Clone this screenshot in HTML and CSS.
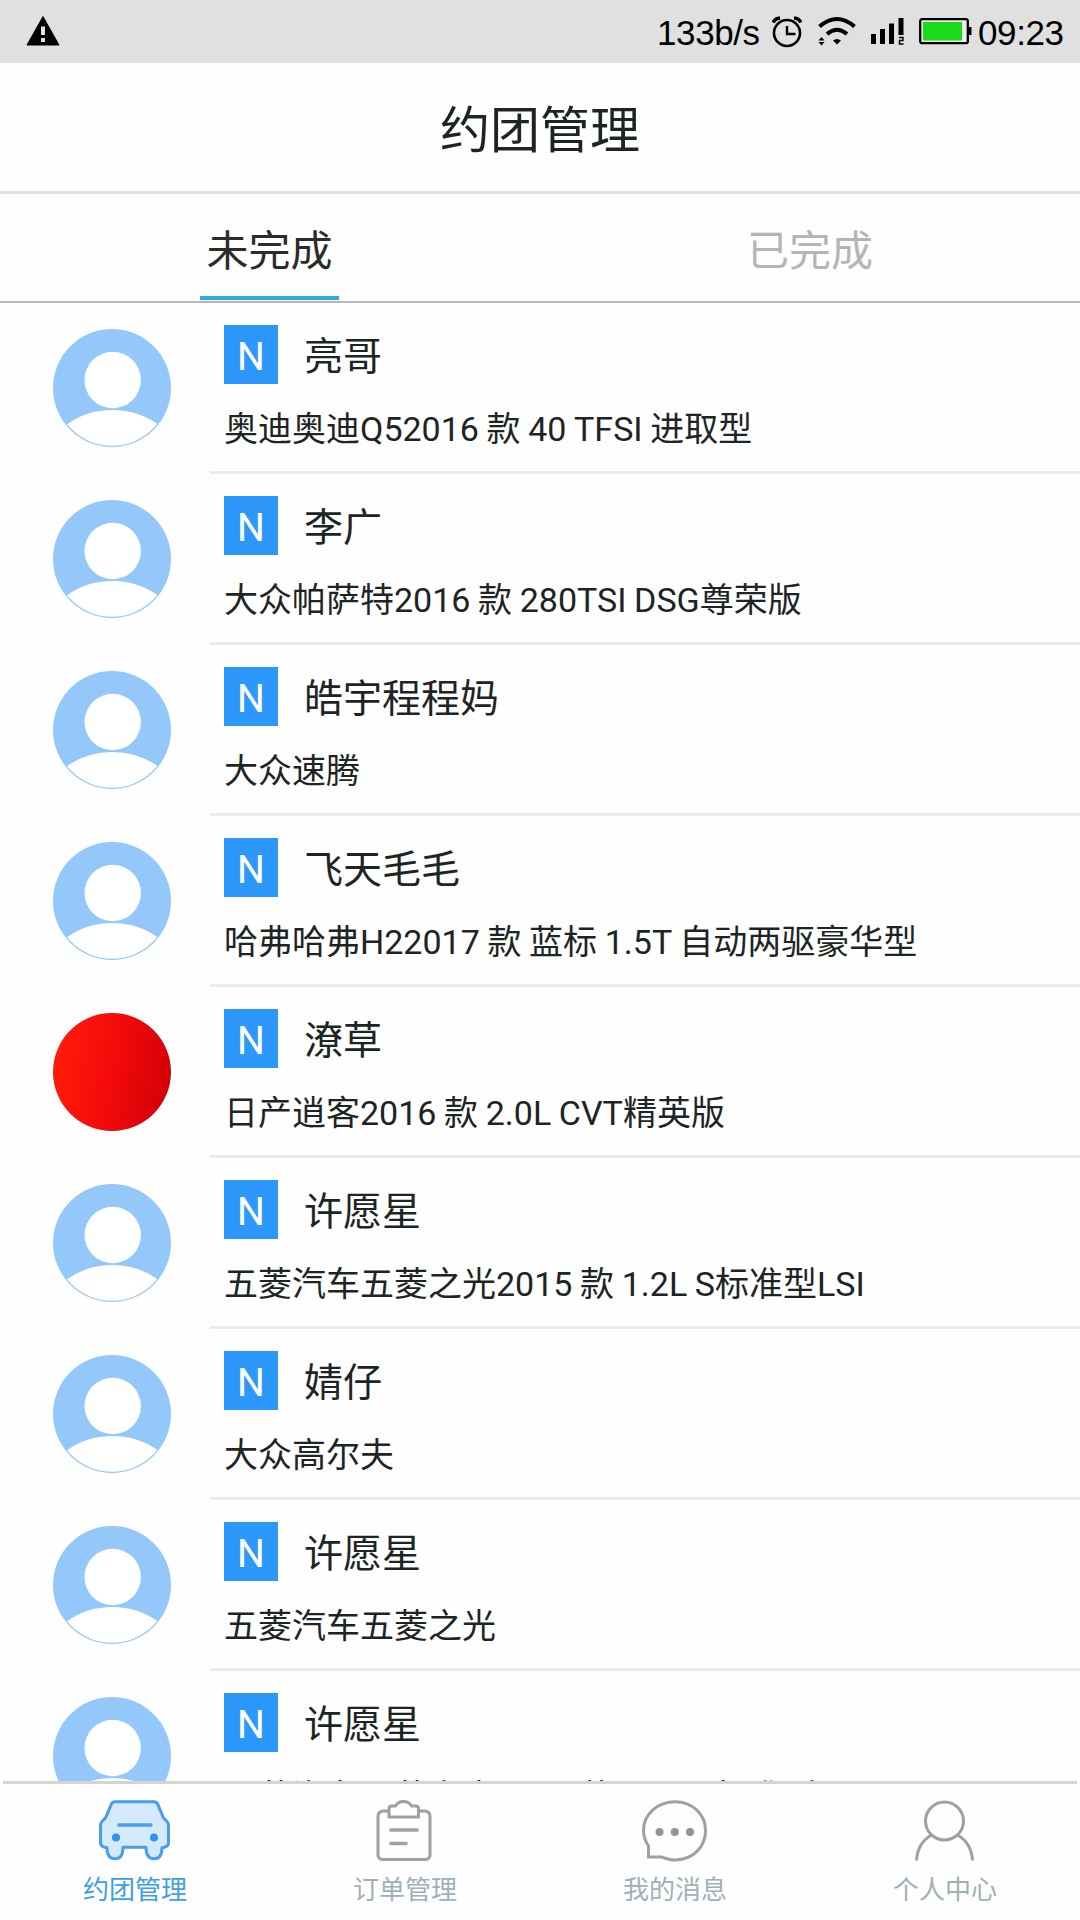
FILE: index.html
```html
<!DOCTYPE html>
<html lang="zh-CN">
<head>
<meta charset="utf-8">
<title>约团管理</title>
<link rel="stylesheet" href="styles.css">
</head>
<body>
<svg class="defs" width="0" height="0" aria-hidden="true">
  <symbol id="person" viewBox="0 0 118 118">
    <clipPath id="disc"><circle cx="59" cy="59" r="57.800"/></clipPath>
    <circle cx="59" cy="59" r="59" fill="#94c8fb"/>
    <g clip-path="url(#disc)" fill="#fff">
      <circle cx="59.7" cy="51" r="28.2"/>
      <path d="M13 96Q33 81 59.500 81Q85 81 106 96V125H13Z"/>
    </g>
  </symbol>
</svg>
<div class="screen">
  <div class="status">
    <svg class="warn" width="34" height="30" viewBox="0 0 34 30"><path d="M17 .5 33 29H1Z" fill="#000" stroke="#000" stroke-linejoin="round"/><path d="M15 10.500h4v8.500h-4zM15 22h4v4h-4z" fill="#e0e0e0"/></svg>
    <span class="speed">133b/s</span>
    <svg class="alarm" width="30" height="32" viewBox="0 0 30 32" fill="none" stroke="#000"><circle cx="15" cy="17" r="13" stroke-width="2.600"/><path d="M15 10v8h8.500" stroke-width="2.400"/><path d="M1 6.500Q3 2.500 8 2M29 6.500Q27 2.500 22 2" stroke-width="3.600"/></svg>
    <svg class="wifi" width="40" height="30" viewBox="0 0 40 30"><g fill="none" stroke="#000" stroke-width="4"><path d="M2.500 10.500Q20-4.500 37.500 10.500"/><path d="M10 18Q20 9.500 30 18"/></g><path d="M16 24.500Q20 21.500 24 24.500L20 28.500ZM1.500 24.500 4.500 21l3 3.500ZM1.500 26h6l-3 3.500Z"/></svg>
    <svg class="signal" width="34" height="28" viewBox="0 0 34 28"><path d="M0 16h5v10H0zM9 11h5v15H9zM18 5.500h5V26h-5zM27.500 0h5v17h-5z"/><path d="M28 19.500h4v3h-3.500v3.500h4" fill="none" stroke="#000" stroke-width="1.400"/></svg>
    <svg class="battery" width="53" height="28" viewBox="0 0 53 28"><rect x="1.200" y="1.200" width="47.600" height="24" rx="2" fill="#eee" stroke="#000" stroke-width="2.300"/><rect x="4" y="4" width="39" height="18.500" fill="#1bdc1b"/><path d="M49 9h3.500v8H49z"/></svg>
    <span class="clock">09:23</span>
  </div>
  <header class="header">约团管理</header>
  <nav class="tabs">
    <div class="tab active"><span>未完成</span></div>
    <div class="tab"><span>已完成</span></div>
  </nav>
  <main class="list">
    <div class="row"><svg class="avatar"><use href="#person"/></svg><div class="info"><div class="who"><span class="badge">N</span><span class="name">亮哥</span></div><div class="car">奥迪奥迪Q52016 款 40 TFSI 进取型</div></div></div>
    <div class="row"><svg class="avatar"><use href="#person"/></svg><div class="info"><div class="who"><span class="badge">N</span><span class="name">李广</span></div><div class="car">大众帕萨特2016 款 280TSI DSG尊荣版</div></div></div>
    <div class="row"><svg class="avatar"><use href="#person"/></svg><div class="info"><div class="who"><span class="badge">N</span><span class="name">皓宇程程妈</span></div><div class="car">大众速腾</div></div></div>
    <div class="row"><svg class="avatar"><use href="#person"/></svg><div class="info"><div class="who"><span class="badge">N</span><span class="name">飞天毛毛</span></div><div class="car">哈弗哈弗H22017 款 蓝标 1.5T 自动两驱豪华型</div></div></div>
    <div class="row"><div class="avatar red"></div><div class="info"><div class="who"><span class="badge">N</span><span class="name">潦草</span></div><div class="car">日产逍客2016 款 2.0L CVT精英版</div></div></div>
    <div class="row"><svg class="avatar"><use href="#person"/></svg><div class="info"><div class="who"><span class="badge">N</span><span class="name">许愿星</span></div><div class="car">五菱汽车五菱之光2015 款 1.2L S标准型LSI</div></div></div>
    <div class="row"><svg class="avatar"><use href="#person"/></svg><div class="info"><div class="who"><span class="badge">N</span><span class="name">婧仔</span></div><div class="car">大众高尔夫</div></div></div>
    <div class="row"><svg class="avatar"><use href="#person"/></svg><div class="info"><div class="who"><span class="badge">N</span><span class="name">许愿星</span></div><div class="car">五菱汽车五菱之光</div></div></div>
    <div class="row"><svg class="avatar"><use href="#person"/></svg><div class="info"><div class="who"><span class="badge">N</span><span class="name">许愿星</span></div><div class="car">五菱汽车五菱之光2015 款 1.2L S标准型LSI</div></div></div>
  </main>
  <div class="rule"></div>
  <footer class="bottom">
    <div class="item on">
      <svg width="72" height="64" viewBox="0 0 72 64"><path d="M16 2.800h39q3 0 4 3l5 12q1 2 3 3.500 2.500 2 2.500 5v17q0 4-4 5l-2.500.5q0 11-8 11-8 0-8-11.500H24q0 11.500-8 11.500-8 0-8-11l-2.500-.5q-4-1-4-5v-17q0-3 2.500-5Q6 19.800 7 17.800L12 5.800q1-3 4-3Z" fill="#d5e9fc" stroke="#479feb" stroke-width="3" stroke-linejoin="round"/><path d="M20 26h32" stroke="#479feb" stroke-width="3.400" stroke-linecap="round"/><circle cx="17" cy="38.500" r="4" fill="#2f93ee"/><circle cx="55" cy="38.500" r="4" fill="#2f93ee"/></svg>
      <span>约团管理</span>
    </div>
    <div class="item">
      <svg width="72" height="64" viewBox="0 0 72 64" fill="none" stroke="#9da1a0" stroke-width="3" stroke-linejoin="round"><path d="M19 12h-4q-6 0-6 5v38.500q0 5 5 5h42q5 0 5-5V17q0-5-6-5h-5"/><path d="M20 18V9.500Q20 7 23 7h3.500Q29 2.500 34.500 2.500T42.500 7h4q3 0 3 2.500V18Z"/><path d="M20.500 31h29M20.500 44.500h18" stroke-width="3.600"/></svg>
      <span>订单管理</span>
    </div>
    <div class="item">
      <svg width="72" height="64" viewBox="0 0 72 64"><path d="M9.500 58h13c4 1.500 8 3 13.500 3 18 0 30.500-13 30.500-29.500S53 2.800 36 2.800 4.500 15 4.500 31.500c0 6 2 11 5 15.500Z" fill="none" stroke="#9da1a0" stroke-width="3"/><g fill="#8f9392"><circle cx="20.500" cy="33" r="4"/><circle cx="35.800" cy="33" r="4"/><circle cx="51" cy="33" r="4"/></g></svg>
      <span>我的消息</span>
    </div>
    <div class="item">
      <svg width="72" height="64" viewBox="0 0 72 64" fill="none" stroke="#9da1a0" stroke-width="3"><circle cx="35.500" cy="22" r="19"/><path d="M22.500 36Q8.500 44 7.500 61.500M48.500 36Q62.500 44 63.500 61.500"/></svg>
      <span>个人中心</span>
    </div>
  </footer>
</div>
</body>
</html>
```
FILE: styles.css
```css
* { box-sizing: border-box; }
body {
  margin: 0;
  background: #fefefe;
  color: #1d2424;
  font-family: Roboto, "Noto Sans CJK SC", sans-serif;
}
.defs { position: absolute; }
.screen {
  width: 1080px;
  height: 1920px;
  display: flex;
  flex-direction: column;
  overflow: hidden;
}
.status {
  height: 63px;
  flex: none;
  display: flex;
  align-items: flex-start;
  background: #e0e0e0;
  color: #000;
  font: 35px/38px "Liberation Sans", sans-serif;
  letter-spacing: -0.4px;
}
.status svg { flex: none; }
.warn { margin: 16px 0 0 26px; }
.speed { width: 107px; margin: 14px 0 0 auto; }
.alarm { margin: 16px 0 0 8px; }
.wifi { margin: 16px 0 0 15px; }
.signal { margin: 18px 0 0 14px; }
.battery { margin: 18px 0 0 14px; }
.clock { width: 102px; margin: 14px 0 0 6px; }
.header {
  height: 131px;
  flex: none;
  border-bottom: 3px solid #dce3e7;
  font-size: 50px;
  line-height: 136px;
  text-align: center;
}
.tabs {
  height: 109px;
  flex: none;
  display: flex;
  border-bottom: 2px solid #b5b8b8;
  font-size: 42px;
  line-height: 115px;
  color: #b5b5b5;
}
.tab {
  flex: 1;
  display: flex;
  justify-content: center;
}
.tab span { height: 106px; padding: 0 6px; }
.tab.active span {
  width: 139px;
  margin-right: 1px;
  border-bottom: 4px solid #30a9dc;
  color: #2b2b2b;
  text-align: center;
}
.list { flex: 1; min-height: 0; overflow: hidden; }
.row {
  height: 171px;
  display: flex;
  padding-left: 53px;
}
.avatar {
  width: 118px;
  height: 118px;
  margin: 26px 39px 0 0;
  flex: none;
}
.red {
  border-radius: 50%;
  background: linear-gradient(100deg, #ff1c0c 5%, #f40a0a 50%, #cc0009 100%);
}
.info {
  flex: 1;
  padding: 22px 0 0 14px;
  border-bottom: 3px solid #ebebeb;
}
.who {
  display: flex;
  gap: 26px;
  height: 59px;
  font-size: 39px;
  line-height: 64px;
}
.badge {
  width: 54px;
  height: 59px;
  background: #2d98fb;
  color: #fff;
  text-align: center;
}
.car {
  margin-top: 20px;
  font-size: 34px;
  line-height: 50px;
  word-spacing: -0.8px;
  white-space: nowrap;
}
.rule {
  height: 3px;
  flex: none;
  margin: 0 3px;
  background: #d4d4d4;
}
.bottom {
  height: 136px;
  flex: none;
  display: flex;
}
.item {
  flex: 1;
  display: flex;
  flex-direction: column;
  align-items: center;
  padding-top: 15px;
  font-size: 26px;
  line-height: 36px;
  color: #9fb0b9;
}
.item span { margin-top: 9px; }
.item.on { color: #3d9fe6; }
```
